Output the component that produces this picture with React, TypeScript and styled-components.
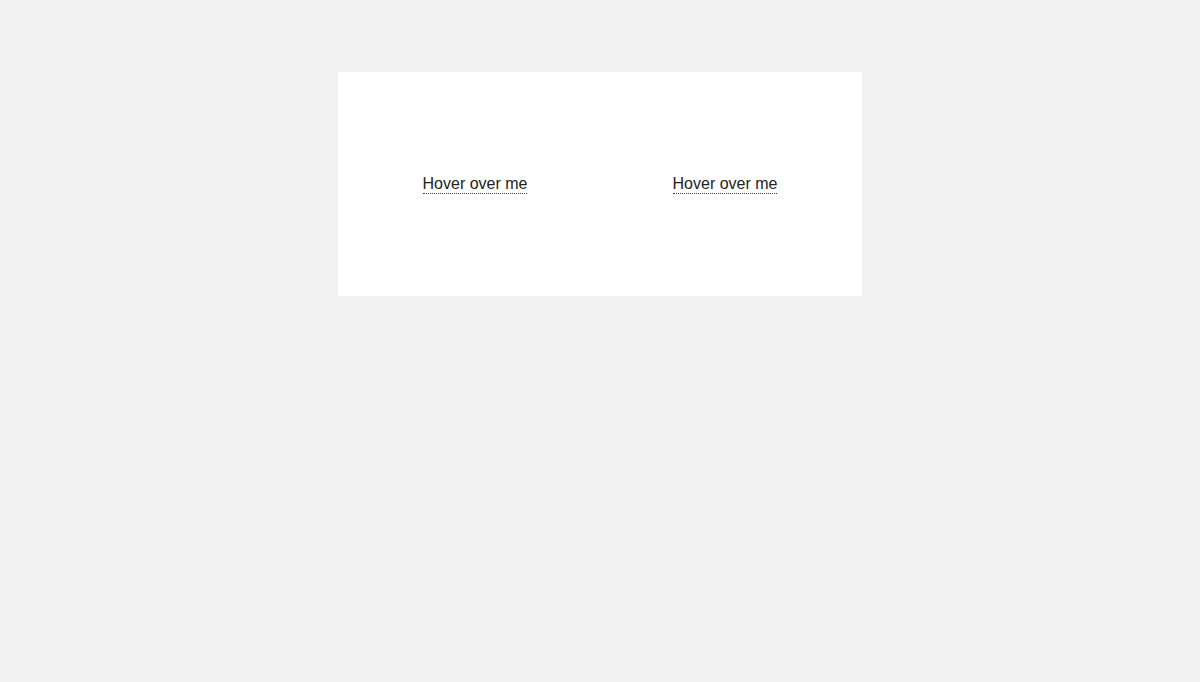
import React from "react";
import styled, { createGlobalStyle } from "styled-components";

const Global = createGlobalStyle`
  html, body {
    margin: 0;
    padding: 0;
    background: #f2f2f2;
    font-family: "Liberation Sans", Arial, sans-serif;
  }
`;

const Page = styled.div`
  display: flex;
  justify-content: center;
  align-items: flex-start;
  padding-top: 72px;
  min-height: 682px;
  box-sizing: border-box;
`;

const Panel = styled.div`
  background: #ffffff;
  padding: 12px;
  display: grid;
  grid-template-columns: 250px 250px;
`;

const Cell = styled.div`
  height: 200px;
  display: flex;
  align-items: center;
  justify-content: center;
`;

const Hint = styled.span`
  font-size: 16px;
  line-height: 18px;
  color: #222222;
  border-bottom: 1px dotted #1a3d8f;
  cursor: help;
`;

export default function App() {
  return (
    <>
      <Global />
      <Page>
        <Panel>
          <Cell>
            <Hint title="Tooltip">Hover over me</Hint>
          </Cell>
          <Cell>
            <Hint title="Tooltip">Hover over me</Hint>
          </Cell>
        </Panel>
      </Page>
    </>
  );
}
